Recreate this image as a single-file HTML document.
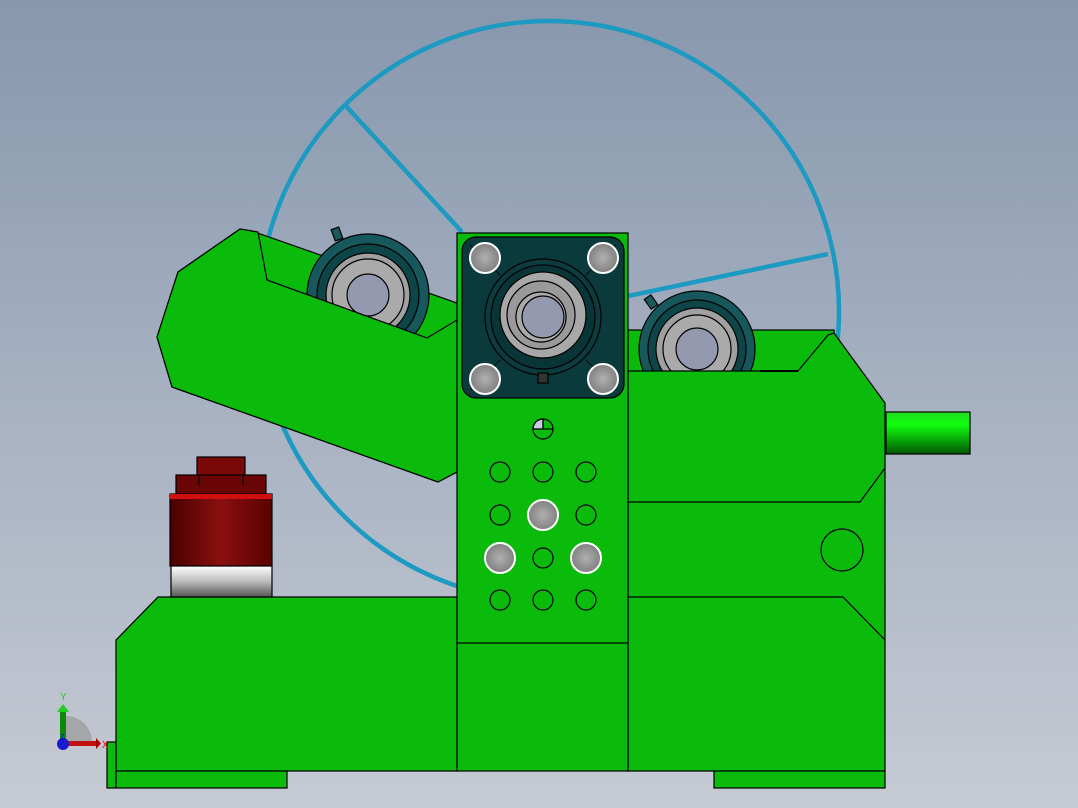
<!DOCTYPE html>
<html><head><style>
html,body{margin:0;padding:0;width:1078px;height:808px;overflow:hidden}
body{background:linear-gradient(#8797ad,#aab4c4 55%,#c6cad3)}
svg{display:block}
</style></head><body>
<svg width="1078" height="808" viewBox="0 0 1078 808" xmlns="http://www.w3.org/2000/svg">
<defs>
<linearGradient id="red" x1="0" x2="1"><stop offset="0" stop-color="#4a0000"/><stop offset="0.5" stop-color="#8a1010"/><stop offset="1" stop-color="#5a0000"/></linearGradient>
<linearGradient id="sil" x1="0" y1="0" x2="0" y2="1"><stop offset="0" stop-color="#fff"/><stop offset="0.5" stop-color="#bbb"/><stop offset="1" stop-color="#555"/></linearGradient>
<linearGradient id="shaft" x1="0" y1="0" x2="0" y2="1"><stop offset="0" stop-color="#22dd22"/><stop offset="0.3" stop-color="#11ff11"/><stop offset="1" stop-color="#005500"/></linearGradient>
<radialGradient id="bolt"><stop offset="0" stop-color="#b0b0b0"/><stop offset="1" stop-color="#808080"/></radialGradient>
</defs>
<g fill="none" stroke="#1c9ac2" stroke-width="4.5">
<circle cx="549" cy="311" r="290"/>
<line x1="345" y1="105" x2="462" y2="232"/>
<line x1="628" y1="296" x2="828" y2="254"/>
</g>
<g stroke="#000" stroke-width="1.2">
<polygon fill="#0bbb0b" points="157,337 178,272 240,229 252,231 457,303 457,472 438,482 172,387"/>
<circle cx="368" cy="295" r="61" fill="#17585c"/>
<circle cx="368" cy="295" r="51" fill="#0d4548"/>
<circle cx="368" cy="295" r="42" fill="#a0a0a0"/>
<circle cx="368" cy="295" r="36" fill="#aaa"/>
<circle cx="368" cy="295" r="21" fill="#9499b0"/>
<rect x="333" y="228" width="8" height="12" fill="#1a5a5a" transform="rotate(-20 337 234)"/>
<polygon fill="#0bbb0b" points="157,337 178,272 240,229 258,232 267,280 427,338 457,320 457,472 438,482 172,387"/>
<!-- right back green -->
<rect x="628" y="330" width="206" height="45" fill="#0bbb0b"/>
<circle cx="697" cy="349" r="58" fill="#17585c"/>
<circle cx="697" cy="349" r="49" fill="#0d4548"/>
<circle cx="697" cy="349" r="41" fill="#a0a0a0"/>
<circle cx="697" cy="349" r="34" fill="#aaa"/>
<circle cx="697" cy="349" r="21" fill="#9499b0"/>
<rect x="647" y="296" width="8" height="12" fill="#1a5a5a" transform="rotate(-35 651 302)"/>
<polygon fill="#0bbb0b" points="628,371 798,371 828,335 834,333 885,403 885,771 628,771"/>
<line x1="760" y1="371" x2="798" y2="371" stroke-width="2"/>
<polyline fill="none" points="628,502 860,502 885,468"/>
<polyline fill="none" points="628,597 843,597 885,640"/>
<circle cx="842" cy="550" r="21" fill="none"/>
<rect x="886" y="412" width="84" height="42" fill="url(#shaft)"/>
<polygon fill="#0bbb0b" points="116,640 158,597 457,597 457,771 116,771"/>
<rect x="107" y="742" width="9" height="46" fill="#0bbb0b"/>
<rect x="116" y="771" width="171" height="17" fill="#0bbb0b"/>
<rect x="714" y="771" width="171" height="17" fill="#0bbb0b"/>
<rect x="197" y="457" width="48" height="20" fill="#7a0a0a"/>
<rect x="176" y="475" width="90" height="20" fill="#6a0606"/>
<line x1="199" y1="475" x2="199" y2="485"/><line x1="243" y1="475" x2="243" y2="485"/>
<rect x="170" y="494" width="102" height="72" fill="url(#red)"/>
<rect x="170" y="494" width="102" height="5" fill="#d01010" stroke="none"/>
<rect x="171" y="566" width="101" height="31" fill="url(#sil)"/>
<rect x="457" y="233" width="171" height="538" fill="#0bbb0b"/>
<line x1="457" y1="643" x2="628" y2="643"/>
<rect x="462" y="237" width="162" height="161" rx="14" fill="#0a3a3b"/>
<g stroke="#000" stroke-width="0.8">
<line x1="470" y1="245" x2="500" y2="275"/><line x1="616" y1="245" x2="586" y2="275"/>
<line x1="470" y1="390" x2="500" y2="360"/><line x1="616" y1="390" x2="586" y2="360"/>
</g>
<circle cx="543" cy="317" r="58" fill="#0c3c3e"/>
<circle cx="543" cy="317" r="52" fill="#0a3536"/>
<circle cx="543" cy="315" r="43" fill="#a8a8a8"/>
<circle cx="541" cy="315" r="34" fill="#9a9a9a"/>
<circle cx="541" cy="317" r="25" fill="#aaa"/>
<circle cx="543" cy="317" r="21" fill="#9499b0"/>
<rect x="538" y="373" width="10" height="10" fill="#333"/>
<g fill="url(#bolt)" stroke="#fff" stroke-width="2">
<circle cx="485" cy="258" r="15"/><circle cx="603" cy="258" r="15"/>
<circle cx="485" cy="379" r="15"/><circle cx="603" cy="379" r="15"/>
<circle cx="543" cy="515" r="15"/><circle cx="500" cy="558" r="15"/><circle cx="586" cy="558" r="15"/>
</g>
<g fill="none">
<circle cx="500" cy="472" r="10"/><circle cx="543" cy="472" r="10"/><circle cx="586" cy="472" r="10"/>
<circle cx="500" cy="515" r="10"/><circle cx="586" cy="515" r="10"/>
<circle cx="543" cy="558" r="10"/>
<circle cx="500" cy="600" r="10"/><circle cx="543" cy="600" r="10"/><circle cx="586" cy="600" r="10"/>
</g>
<path d="M543,419 A10,10 0 0 0 533,429 L543,429 Z" fill="#c8cce0"/>
<circle cx="543" cy="429" r="10" fill="none"/>
<line x1="543" y1="419" x2="543" y2="429"/><line x1="543" y1="429" x2="553" y2="429"/>
</g>
<path d="M66,716 A26,26 0 0 1 92,742 L66,742 Z" fill="#999" opacity="0.7"/>
<rect x="60" y="710" width="6" height="32" fill="#0a8a0a"/>
<polygon points="57,712 63,704 69,712" fill="#22cc22"/>
<rect x="66" y="741" width="30" height="5" fill="#c01010"/>
<polygon points="96,738 101,743.5 96,749" fill="#a00"/>
<circle cx="63" cy="744" r="6" fill="#1a1acc"/>
<text x="60" y="700" font-family="Liberation Sans,sans-serif" font-size="10" fill="#2c2">Y</text>
<text x="102" y="748" font-family="Liberation Sans,sans-serif" font-size="10" fill="#e00">X</text>
<text x="60" y="740" font-family="Liberation Sans,sans-serif" font-size="8" fill="#00f">Z</text>
</svg>
</body></html>
